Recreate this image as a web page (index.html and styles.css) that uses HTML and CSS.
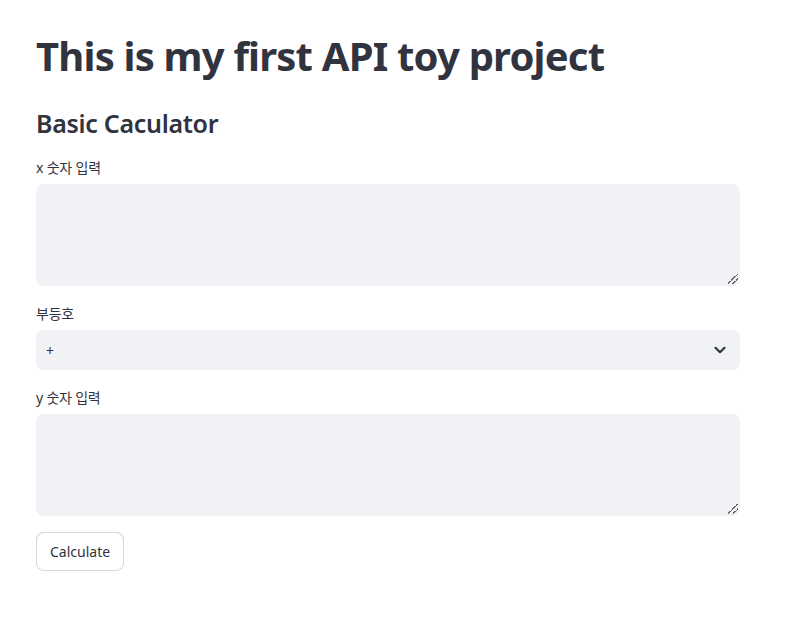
FILE: index.html
```html
<!DOCTYPE html>
<html lang="ko">
<head>
<meta charset="utf-8">
<link rel="stylesheet" href="styles.css">
</head>
<body>
<main class="main">
  <h1 class="title">This is my first API toy project</h1>
  <h3 class="subheader">Basic Caculator</h3>
  <div class="field">
    <label class="label">x 숫자 입력</label>
    <div class="textarea"><span class="grip"></span></div>
  </div>
  <div class="field">
    <label class="label">부등호</label>
    <div class="select">
      <span class="select-value">+</span>
      <svg class="chevron" width="16" height="16" viewBox="0 0 16 16"><path d="M3.5 5.8 L8 10.2 L12.5 5.8" fill="none" stroke="#31333f" stroke-width="2.2" stroke-linecap="round" stroke-linejoin="round"/></svg>
    </div>
  </div>
  <div class="field">
    <label class="label">y 숫자 입력</label>
    <div class="textarea"><span class="grip"></span></div>
  </div>
  <button class="btn">Calculate</button>
</main>
</body>
</html>
```
FILE: styles.css
```css
html, body {
  margin: 0;
  padding: 0;
  background: #ffffff;
}
body {
  font-family: "Noto Sans", "Noto Sans CJK KR", sans-serif;
  color: #31333f;
}
.main {
  width: 704px;
  padding: 26px 0 0 36px;
  display: flex;
  flex-direction: column;
}
.title {
  margin: 0;
  font-size: 40px;
  font-weight: 700;
  line-height: 60px;
  letter-spacing: -0.8px;
}
.subheader {
  margin: 19px 0 5px 0;
  font-size: 25px;
  font-weight: 600;
  line-height: 36px;
  letter-spacing: -0.3px;
}
.field {
  display: flex;
  flex-direction: column;
  margin-top: 12px;
}
.field + .field {
  margin-top: 18px;
}
.label {
  font-size: 14px;
  line-height: 20px;
  margin-bottom: 6px;
  letter-spacing: -0.2px;
}
.textarea {
  position: relative;
  height: 102px;
  background: #f0f2f6;
  border-radius: 8px;
}
.grip {
  position: absolute;
  right: 2px;
  bottom: 2px;
  width: 10px;
  height: 10px;
  background: linear-gradient(135deg, transparent 0 45%, #666 45% 52%, transparent 52% 70%, #666 70% 77%, transparent 77%);
}
.select {
  height: 40px;
  background: #f0f2f6;
  border-radius: 8px;
  display: flex;
  align-items: center;
  justify-content: space-between;
  padding: 0 12px 0 10px;
}
.select-value {
  font-size: 14px;
}
.chevron {
  display: block;
}
.btn {
  align-self: flex-start;
  margin-top: 16px;
  height: 39px;
  padding: 0 13px;
  background: #fff;
  border: 1px solid rgba(49, 51, 63, 0.2);
  border-radius: 8px;
  font-family: "Noto Sans", sans-serif;
  font-size: 14px;
  color: #31333f;
}
```
